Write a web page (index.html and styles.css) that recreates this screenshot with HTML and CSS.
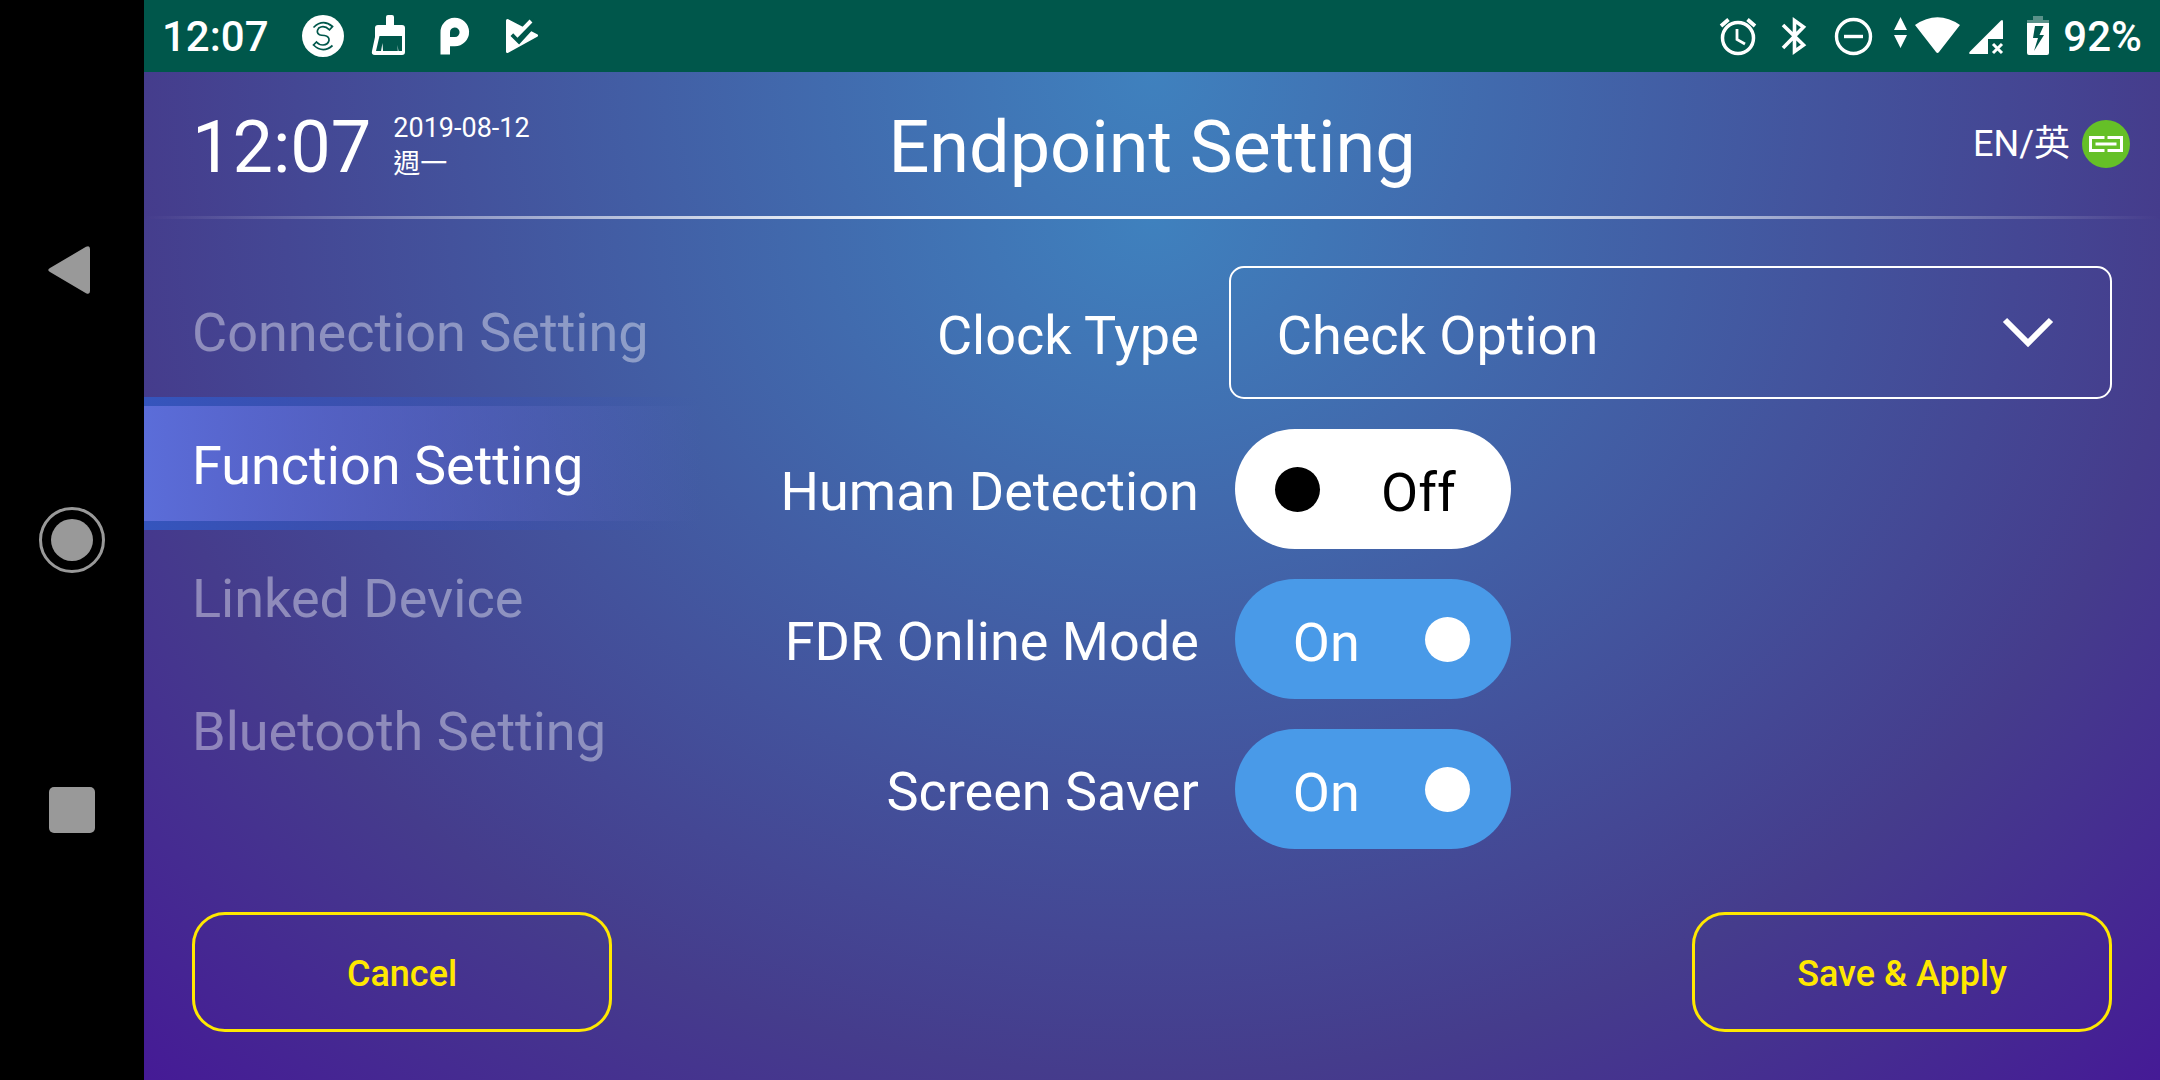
FILE: index.html
```html
<!DOCTYPE html>
<html lang="en">
<head>
<meta charset="utf-8">
<meta name="viewport" content="width=device-width, initial-scale=1">
<title>Endpoint Setting</title>
<link rel="stylesheet" href="styles.css">
</head>
<body>
<div class="device">
  <div class="navbar">
    <button class="nav-button" type="button" aria-label="Back">
      <svg width="72" height="72" viewBox="0 0 72 72"><path d="M14 34 L50 12.800 Q54 11 54 15 V57 Q54 61 50 59.200 L14 38 Q10.500 36 14 34 Z" fill="#999"/></svg>
    </button>
    <button class="nav-button" type="button" aria-label="Home">
      <svg width="72" height="72" viewBox="0 0 72 72"><circle cx="36" cy="36" r="31.500" fill="none" stroke="#999" stroke-width="3"/><circle cx="36" cy="36" r="21" fill="#999"/></svg>
    </button>
    <button class="nav-button" type="button" aria-label="Recent apps">
      <svg width="72" height="72" viewBox="0 0 72 72"><rect x="13" y="13" width="46" height="46" rx="5" fill="#999"/></svg>
    </button>
  </div>

  <div class="screen">
    <div class="statusbar">
      <span class="status-time">12:07</span>
      <svg class="first-notice" width="66" height="72" viewBox="0 0 66 72">
        <circle cx="33" cy="36" r="21" fill="#fff"/>
        <path d="M23.500 27.500 Q33 18.500 42.500 26.500 L39.500 29.800 Q34 24.500 28.800 28 Q25.500 32.500 29.500 34.800 Q31 35.500 34.500 35.500 Q39.500 36.500 39 40.500 Q38 44.800 33 45 Q29 45 26.500 42 L23.500 45 Q33 54 42.500 45.500" fill="none" stroke="#00574b" stroke-width="1.700"/>
      </svg>
      <svg width="66" height="72" viewBox="0 0 66 72">
        <path d="M30 25 V17 Q30 15 32 15 H36 Q38 15 38 17 V25 H46 Q49 25 49 28 V52 Q49 55 46 55 H19 Q15 55 16 51 L19 37 V28 Q19 25 22 25 Z" fill="#fff"/>
        <path d="M23.500 36 H46 V51 H42.500 L41.500 45 L41.800 51 H27 L26.500 43 L25 51 H20 Z" fill="#00574b"/>
      </svg>
      <svg width="66" height="72" viewBox="0 0 66 72">
        <path fill="#fff" fill-rule="evenodd" d="M18.500 54.500 V32.500 A14.300 14.300 0 1 1 32.800 46.300 H28 V54.500 Z M28 37 H33 A4.800 4.800 0 1 0 28 32.500 Z"/>
      </svg>
      <svg width="66" height="72" viewBox="0 0 66 72">
        <path d="M19.500 20.500 L48.500 35.500 L19.500 51.500 Z" fill="#fff" stroke="#fff" stroke-width="3" stroke-linejoin="round"/>
        <path d="M25 33.500 L31 39.500 L48 21" fill="none" stroke="#00574b" stroke-width="7"/>
        <path d="M24 29 L29.500 34.800 L43 21" fill="none" stroke="#fff" stroke-width="4"/>
      </svg>
      <span class="spacer"></span>
      <svg width="56" height="72" viewBox="0 0 56 72" fill="none" stroke="#fff">
        <circle cx="28" cy="38" r="15.500" stroke-width="3.500"/>
        <path d="M27 29 V39.500 L35 44" stroke-width="2.800"/>
        <path d="M11 26 L18.500 19.500 M45 26 L37.500 19.500" stroke-width="3.800"/>
      </svg>
      <svg width="56" height="72" viewBox="0 0 56 72" fill="none" stroke="#fff" stroke-width="3.600">
        <path d="M17 25 L37.500 45 L28.500 51.500 V20.500 L37.500 27 L17 48"/>
      </svg>
      <svg width="62" height="72" viewBox="0 0 62 72" fill="none" stroke="#fff" stroke-width="3.400">
        <circle cx="31.500" cy="36.500" r="17"/>
        <path d="M22 36.500 H41"/>
      </svg>
      <svg width="30" height="72" viewBox="0 0 30 72" fill="#fff">
        <path d="M16.500 17 L23 30 H10 Z M10 35 H23 L16.500 48 Z"/>
      </svg>
      <svg width="48" height="72" viewBox="0 0 48 72" fill="#fff">
        <path d="M1 25 Q23.500 9.500 46 25 L25 52 Q23.500 54 22 52 Z"/>
      </svg>
      <svg width="44" height="72" viewBox="0 0 44 72">
        <path d="M39 20.500 Q41 19 41 22 V39 H26 V54 H8.500 Q6 54 8 51.500 Z" fill="#fff"/>
        <path d="M31 44 L40 53 M40 44 L31 53" stroke="#fff" stroke-width="3"/>
      </svg>
      <svg width="57" height="72" viewBox="0 0 57 72">
        <path d="M27 16 H37 V20 H43 V23 H21 V20 H27 Z" fill="#fff" opacity=".35"/>
        <path fill="#fff" fill-rule="evenodd" d="M21 23 H43 V53 Q43 55 41 55 H23 Q21 55 21 53 Z M29 26 L27 38 H32 L28 51 L38 35 H33.500 L37.500 26 Z"/>
      </svg>
      <span class="status-battery">92%</span>
    </div>

    <header class="header">
      <div class="clock">
        <time class="clock-time" datetime="12:07">12:07</time>
        <div class="clock-date">
          <time datetime="2019-08-12">2019-08-12</time>
          <span lang="zh-Hant">週一</span>
        </div>
      </div>
      <h1 class="title">Endpoint Setting</h1>
      <div class="header-tools">
        <button class="language" type="button">EN/英</button>
        <svg width="48" height="48" viewBox="0 0 48 48" role="img" aria-label="Connected">
          <circle cx="24" cy="24" r="24" fill="#65c027"/>
          <path d="M22.500 17.500 H8.500 V30.500 H22.500 M25.500 17.500 H39.500 V30.500 H25.500 M13.500 24 H34.500" fill="none" stroke="#fff" stroke-width="3"/>
        </svg>
      </div>
    </header>

    <main class="page">
      <div class="columns">
        <nav class="sidebar">
          <a class="side-link" href="#connection">Connection Setting</a>
          <a class="side-link side-link-active" href="#function" aria-current="page">Function Setting</a>
          <a class="side-link" href="#device">Linked Device</a>
          <a class="side-link" href="#bluetooth">Bluetooth Setting</a>
        </nav>

        <form class="settings" id="settings">
          <label class="row-label row-label-tall" for="clock-type">Clock Type</label>
          <div class="select-box">
            <select class="select" id="clock-type">
              <option>Check Option</option>
            </select>
            <svg class="chevron" width="52" height="32" viewBox="0 0 52 32"><path d="M3 3 L26 26 L49 3" fill="none" stroke="#fff" stroke-width="6"/></svg>
          </div>

          <label class="row-label" for="human">Human Detection</label>
          <label class="toggle">
            <input class="knob" type="checkbox" role="switch" id="human">
            <span class="toggle-text">Off</span>
          </label>

          <label class="row-label" for="fdr">FDR Online Mode</label>
          <label class="toggle toggle-on">
            <input class="knob" type="checkbox" role="switch" id="fdr" checked>
            <span class="toggle-text">On</span>
          </label>

          <label class="row-label" for="saver">Screen Saver</label>
          <label class="toggle toggle-on">
            <input class="knob" type="checkbox" role="switch" id="saver" checked>
            <span class="toggle-text">On</span>
          </label>
        </form>
      </div>

      <div class="actions">
        <button class="action" type="reset" form="settings">Cancel</button>
        <button class="action" type="submit" form="settings">Save &amp; Apply</button>
      </div>
    </main>
  </div>
</div>
</body>
</html>
```
FILE: styles.css
```css
* {
  box-sizing: border-box;
}

body {
  margin: 0;
  background: #000;
  color: #fff;
  font-family: Roboto, "Noto Sans CJK TC", sans-serif;
  font-size: 54px;
}

button,
select {
  margin: 0;
  border: 0;
  padding: 0;
  background: none;
  color: inherit;
  font: inherit;
}

svg {
  display: block;
  flex: none;
}

.device {
  display: flex;
  min-height: 100vh;
}

/* System navigation strip */
.navbar {
  display: flex;
  flex-direction: column;
  flex: none;
  align-items: center;
  justify-content: center;
  gap: 198px;
  width: 144px;
}

.screen {
  display: flex;
  flex: 1;
  flex-direction: column;
  min-width: 0;
}

/* System status bar */
.statusbar {
  display: flex;
  align-items: center;
  height: 72px;
  padding: 0 18px;
  background: #00574b;
  font-size: 42px;
  font-weight: 500;
}

.first-notice {
  margin-left: 21px;
}

.spacer {
  flex: 1;
}

/* Page header */
.header {
  display: grid;
  grid-template-columns: 1fr auto 1fr;
  align-items: center;
  height: 147px;
  padding-bottom: 3px;
  background:
    linear-gradient(to right, transparent, #fff 38%, #fff 62%, transparent) bottom / 100% 3px no-repeat,
    radial-gradient(circle farthest-corner at 50% 0, #3f81be, #453c8c);
}

.clock {
  display: flex;
  align-items: center;
  gap: 22px;
  padding-left: 48px;
}

.clock-time,
.title {
  margin: 0;
  padding-top: 8px;
  font-size: 72px;
  font-weight: 400;
  line-height: 84px;
}

.clock-date {
  display: flex;
  flex-direction: column;
  padding-top: 4px;
  font-size: 27px;
  line-height: 36px;
}

.header-tools {
  display: flex;
  align-items: center;
  justify-content: flex-end;
  gap: 12px;
  padding-right: 30px;
}

.language {
  font-size: 36px;
  line-height: 40px;
}

/* Content */
.page {
  display: flex;
  flex: 1;
  flex-direction: column;
  justify-content: space-between;
  padding-bottom: 48px;
  background: radial-gradient(ellipse 72% 140% at 50% 0, #3f81be, #453c8c 71%, #451a96);
}

.columns {
  display: flex;
  align-items: flex-start;
}

.sidebar {
  display: flex;
  flex: none;
  flex-direction: column;
  width: 558px;
  padding-top: 45px;
}

.side-link {
  padding: 5px 0 0 48px;
  color: rgba(255, 255, 255, .4);
  line-height: 128px;
  text-decoration: none;
}

.side-link-active {
  background:
    linear-gradient(to right, #5b6dd9, rgba(70, 92, 180, 0)) center / 100% 115px no-repeat,
    linear-gradient(to right, #3555bd, rgba(53, 85, 175, 0)) top / 100% 9px no-repeat,
    linear-gradient(to right, #3555bd, rgba(53, 85, 175, 0)) bottom / 100% 9px no-repeat;
  color: #fff;
}

.settings {
  display: grid;
  flex: 1;
  grid-template-columns: 36fr 64fr;
  gap: 30px;
  padding: 47px 48px 0 0;
}

.row-label {
  padding-top: 6px;
  line-height: 114px;
  text-align: right;
}

.row-label-tall {
  line-height: 127px;
}

.select-box {
  position: relative;
}

.select {
  width: 100%;
  height: 133px;
  padding: 6px 100px 0 46px;
  border: 2px solid #fff;
  border-radius: 15px;
  appearance: none;
}

.chevron {
  position: absolute;
  top: 51px;
  right: 58px;
  pointer-events: none;
}

.toggle {
  display: flex;
  align-items: center;
  justify-content: space-between;
  width: 276px;
  height: 120px;
  margin-left: 6px;
  padding: 0 55px 0 40px;
  border-radius: 60px;
  background: #fff;
  color: #000;
}

.toggle-on {
  flex-direction: row-reverse;
  padding: 0 41px 0 58px;
  background: #499ae8;
  color: #fff;
}

.toggle-text {
  padding-top: 6px;
}

.knob {
  width: 45px;
  height: 45px;
  margin: 0;
  border-radius: 50%;
  background: #000;
  appearance: none;
}

.knob:checked {
  background: #fff;
}

.actions {
  display: flex;
  justify-content: space-between;
  padding: 0 48px;
}

.action {
  width: 420px;
  height: 120px;
  padding-top: 4px;
  border: 3px solid #ffe800;
  border-radius: 33px;
  color: #ffe800;
  font-size: 36px;
  font-weight: 500;
}
```
